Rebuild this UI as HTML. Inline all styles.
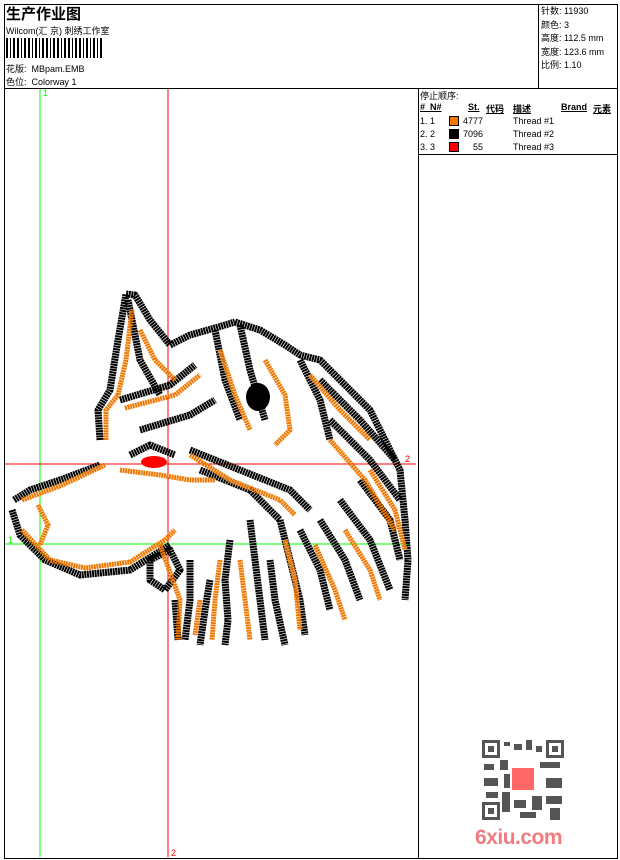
<!DOCTYPE html>
<html><head><meta charset="utf-8"><style>
body{margin:0;background:#fff;width:620px;height:860px;position:relative;overflow:hidden;font-family:"Liberation Sans","Noto Sans CJK SC",sans-serif;font-size:9px;color:#000}
.a{position:absolute}
</style></head><body>
<div class="a" style="left:4px;top:4px;width:612px;height:853px;border:1px solid #000"></div>
<div class="a" style="left:4px;top:88px;width:613px;height:1px;background:#000"></div>
<div class="a" style="left:538px;top:4px;width:1px;height:84px;background:#000"></div>
<div class="a" style="left:418px;top:88px;width:1px;height:770px;background:#000"></div>
<div class="a" style="left:418px;top:154px;width:199px;height:1px;background:#000"></div>
<div class="a" style="left:6px;top:3px;font-size:15px;font-weight:bold">生产作业图</div>
<div class="a" style="left:6px;top:24px">Wilcom(汇 京) 刺绣工作室</div>
<svg class="a" style="left:6px;top:38px" width="96" height="20"><g fill="#000">
<rect x="0" y="0" width="2" height="20"/><rect x="4" y="0" width="1" height="20"/><rect x="7" y="0" width="2" height="20"/><rect x="11" y="0" width="2" height="20"/><rect x="15" y="0" width="1" height="20"/><rect x="18" y="0" width="2" height="20"/><rect x="22" y="0" width="2" height="20"/><rect x="26" y="0" width="1" height="20"/><rect x="29" y="0" width="2" height="20"/><rect x="33" y="0" width="1" height="20"/><rect x="36" y="0" width="2" height="20"/><rect x="40" y="0" width="2" height="20"/><rect x="44" y="0" width="1" height="20"/><rect x="47" y="0" width="2" height="20"/><rect x="51" y="0" width="2" height="20"/><rect x="55" y="0" width="1" height="20"/><rect x="58" y="0" width="2" height="20"/><rect x="62" y="0" width="2" height="20"/><rect x="66" y="0" width="1" height="20"/><rect x="69" y="0" width="2" height="20"/><rect x="73" y="0" width="2" height="20"/><rect x="77" y="0" width="1" height="20"/><rect x="80" y="0" width="2" height="20"/><rect x="84" y="0" width="1" height="20"/><rect x="87" y="0" width="2" height="20"/><rect x="91" y="0" width="1" height="20"/><rect x="94" y="0" width="2" height="20"/></g></svg>
<div class="a" style="left:6px;top:62px">花版:&nbsp; MBpam.EMB</div>
<div class="a" style="left:6px;top:75px">色位:&nbsp; Colorway 1</div>
<div class="a" style="left:541px;top:5px;line-height:13.5px">针数: 11930<br>颜色: 3<br>高度: 112.5 mm<br>宽度: 123.6 mm<br>比例: 1.10</div>
<div class="a" style="left:420px;top:89px">停止顺序:</div>
<div class="a" style="left:420px;top:102px;font-weight:bold;text-decoration:underline">#&nbsp; N#</div>
<div class="a" style="left:468px;top:102px;font-weight:bold;text-decoration:underline">St.</div>
<div class="a" style="left:486px;top:102px;font-weight:bold;text-decoration:underline">代码</div>
<div class="a" style="left:513px;top:102px;font-weight:bold;text-decoration:underline">描述</div>
<div class="a" style="left:561px;top:102px;font-weight:bold;text-decoration:underline">Brand</div>
<div class="a" style="left:593px;top:102px;font-weight:bold;text-decoration:underline">元素</div>
<div class="a" style="left:420px;top:115px;line-height:13px">1. 1<br>2. 2<br>3. 3</div>
<div class="a" style="left:449px;top:116px;width:8px;height:8px;border:1px solid #000;background:#f07800"></div>
<div class="a" style="left:449px;top:129px;width:10px;height:10px;background:#000"></div>
<div class="a" style="left:449px;top:142px;width:8px;height:8px;border:1px solid #000;background:#f00"></div>
<div class="a" style="left:461px;top:115px;line-height:13px;width:22px;text-align:right">4777<br>7096<br>55</div>
<div class="a" style="left:513px;top:115px;line-height:13px">Thread #1<br>Thread #2<br>Thread #3</div>
<svg class="a" style="left:0;top:0" width="620" height="860">
<line x1="40" y1="89" x2="40" y2="857" stroke="#0f0"/>
<line x1="5" y1="544" x2="410" y2="544" stroke="#0f0"/>
<line x1="168" y1="89" x2="168" y2="857" stroke="#f00"/>
<line x1="5" y1="464" x2="416" y2="464" stroke="#f00"/>
<text x="43" y="96" fill="#0f0" font-size="9" font-family="Liberation Sans">1</text>
<text x="8" y="543" fill="#0f0" font-size="9" font-family="Liberation Sans">1</text>
<text x="405" y="462" fill="#f00" font-size="9" font-family="Liberation Sans">2</text>
<text x="171" y="856" fill="#f00" font-size="9" font-family="Liberation Sans">2</text>
<g fill="none" stroke-dasharray="2 0.6" stroke-linecap="butt" stroke-linejoin="round">
<g stroke="#000" stroke-width="7">
<path d="M100,440 L98,410 L110,390 L118,340 L126,294 L135,295 L150,320 L170,345 L190,335 L215,328 L235,322"/>
<path d="M235,322 L260,330 L285,345 L300,355 L320,360 L345,385 L370,410 L385,440 L400,470 L405,520 L408,560 L405,600"/>
<path d="M128,300 L140,360 L160,395"/>
<path d="M120,400 L170,385 L195,365"/>
<path d="M140,430 L190,415 L215,400"/>
<path d="M14,500 L30,490 L60,480 L100,465"/>
<path d="M12,510 L20,535 L45,560 L80,575 L130,570 L170,545"/>
<path d="M150,560 L170,550 L180,570 L165,590 L150,580 Z"/>
<path d="M215,330 L225,380 L240,420"/>
<path d="M240,325 L250,370 L265,420"/>
<path d="M300,360 L320,400 L330,440"/>
<path d="M320,380 L360,420 L395,460"/>
<path d="M330,420 L370,460 L400,500"/>
<path d="M190,450 L240,470 L290,490 L310,510"/>
<path d="M200,470 L250,490 L280,520"/>
<path d="M130,455 L150,445 L175,455"/>
<path d="M250,520 L255,560 L260,600 L265,640"/>
<path d="M230,540 L225,580 L228,620 L225,645"/>
<path d="M210,580 L205,610 L200,645"/>
<path d="M190,560 L190,600 L185,640"/>
<path d="M280,520 L290,560 L300,600 L305,635"/>
<path d="M300,530 L320,570 L330,610"/>
<path d="M320,520 L345,560 L360,600"/>
<path d="M340,500 L370,540 L390,590"/>
<path d="M360,480 L390,520 L400,560"/>
<path d="M270,560 L275,600 L285,645"/>
<path d="M175,600 L178,640"/>
</g>
<g stroke="#f07800" stroke-width="5">
<path d="M106,440 L106,410 L118,395 L126,360 L132,310"/>
<path d="M140,330 L155,360 L175,380"/>
<path d="M125,408 L175,395 L200,375"/>
<path d="M22,500 L60,486 L105,465"/>
<path d="M38,505 L48,525 L40,545"/>
<path d="M22,530 L50,560 L85,568 L130,562 L165,540 L175,530"/>
<path d="M120,470 L160,475 L190,480 L215,480"/>
<path d="M190,455 L230,480 L280,500 L295,515"/>
<path d="M220,350 L235,395 L250,430"/>
<path d="M265,360 L285,395 L290,430 L275,445"/>
<path d="M310,375 L340,410 L370,440"/>
<path d="M330,440 L365,480 L395,530"/>
<path d="M240,560 L245,600 L250,640"/>
<path d="M285,540 L295,580 L300,630"/>
<path d="M315,545 L335,590 L345,620"/>
<path d="M345,530 L370,570 L380,600"/>
<path d="M220,560 L215,600 L212,640"/>
<path d="M200,600 L195,635"/>
<path d="M160,545 L180,600 L178,640"/>
<path d="M370,470 L395,510 L405,550"/>
</g>
</g>
<ellipse cx="258" cy="397" rx="12" ry="14" fill="#000"/>
<ellipse cx="154" cy="462" rx="13" ry="6" fill="#f00"/>
</svg>
<svg class="a" style="left:480px;top:738px" width="86" height="84"><rect width="86" height="84" fill="#fff"/>
<g fill="#555"><rect x="2" y="2" width="18" height="18"/><rect x="66" y="2" width="18" height="18"/><rect x="2" y="64" width="18" height="18"/>
<rect x="24" y="4" width="6" height="4"/><rect x="34" y="6" width="8" height="6"/><rect x="46" y="2" width="6" height="10"/><rect x="56" y="8" width="6" height="6"/>
<rect x="4" y="26" width="10" height="6"/><rect x="20" y="22" width="8" height="10"/><rect x="60" y="24" width="20" height="6"/><rect x="4" y="40" width="14" height="8"/><rect x="66" y="40" width="16" height="10"/><rect x="6" y="54" width="12" height="6"/><rect x="22" y="54" width="8" height="20"/><rect x="34" y="62" width="12" height="8"/><rect x="52" y="58" width="10" height="14"/><rect x="66" y="58" width="16" height="8"/><rect x="70" y="70" width="10" height="12"/><rect x="40" y="74" width="16" height="6"/><rect x="24" y="36" width="6" height="14"/></g>
<g fill="#fff"><rect x="5" y="5" width="12" height="12"/><rect x="69" y="5" width="12" height="12"/><rect x="5" y="67" width="12" height="12"/></g>
<g fill="#555"><rect x="8" y="8" width="6" height="6"/><rect x="72" y="8" width="6" height="6"/><rect x="8" y="70" width="6" height="6"/></g>
<rect x="32" y="30" width="22" height="22" fill="#f66"/></svg>
<div class="a" style="left:475px;top:826px;font-size:21px;font-weight:bold;color:#f07c80;letter-spacing:-0.5px">6xiu.com</div>
</body></html>
